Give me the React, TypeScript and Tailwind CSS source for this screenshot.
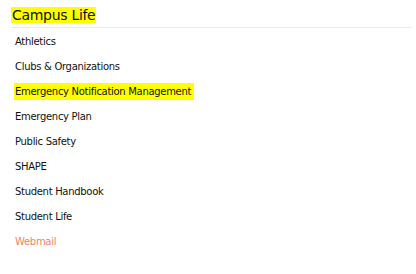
const links = [
  'Athletics',
  'Clubs & Organizations',
  'Emergency Notification Management',
  'Emergency Plan',
  'Public Safety',
  'SHAPE',
  'Student Handbook',
  'Student Life',
];

export default function App() {
  return (
    <div className="w-[416px] h-[274px] bg-white pl-[11px] pr-[4px] pt-[7px] font-['DejaVu_Sans',sans-serif] text-[#111]">
      {/* Header */}
      <div className="flex border-b border-[#e6efe0] pb-[4px]">
        <h2 className="bg-[#ffff00] h-[16px] leading-[16px] px-[1px] text-[14px] tracking-[-0.3px]">
          Campus Life
        </h2>
      </div>

      {/* Links */}
      <ul className="pt-[1px]">
        {links.map((l) => (
          <li key={l} className="h-[25px] flex items-center pl-[4px] text-[10px] tracking-[-0.3px]">
            {l === 'Emergency Notification Management' ? (
              <span className="bg-[#ffff00] -ml-[1px] pl-[1px] pr-[3px] leading-[17px]">{l}</span>
            ) : (
              l
            )}
          </li>
        ))}
        <li className="h-[25px] flex items-center pl-[4px] text-[10px] tracking-[-0.3px] text-[#f08468]">
          Webmail
        </li>
      </ul>
    </div>
  );
}
